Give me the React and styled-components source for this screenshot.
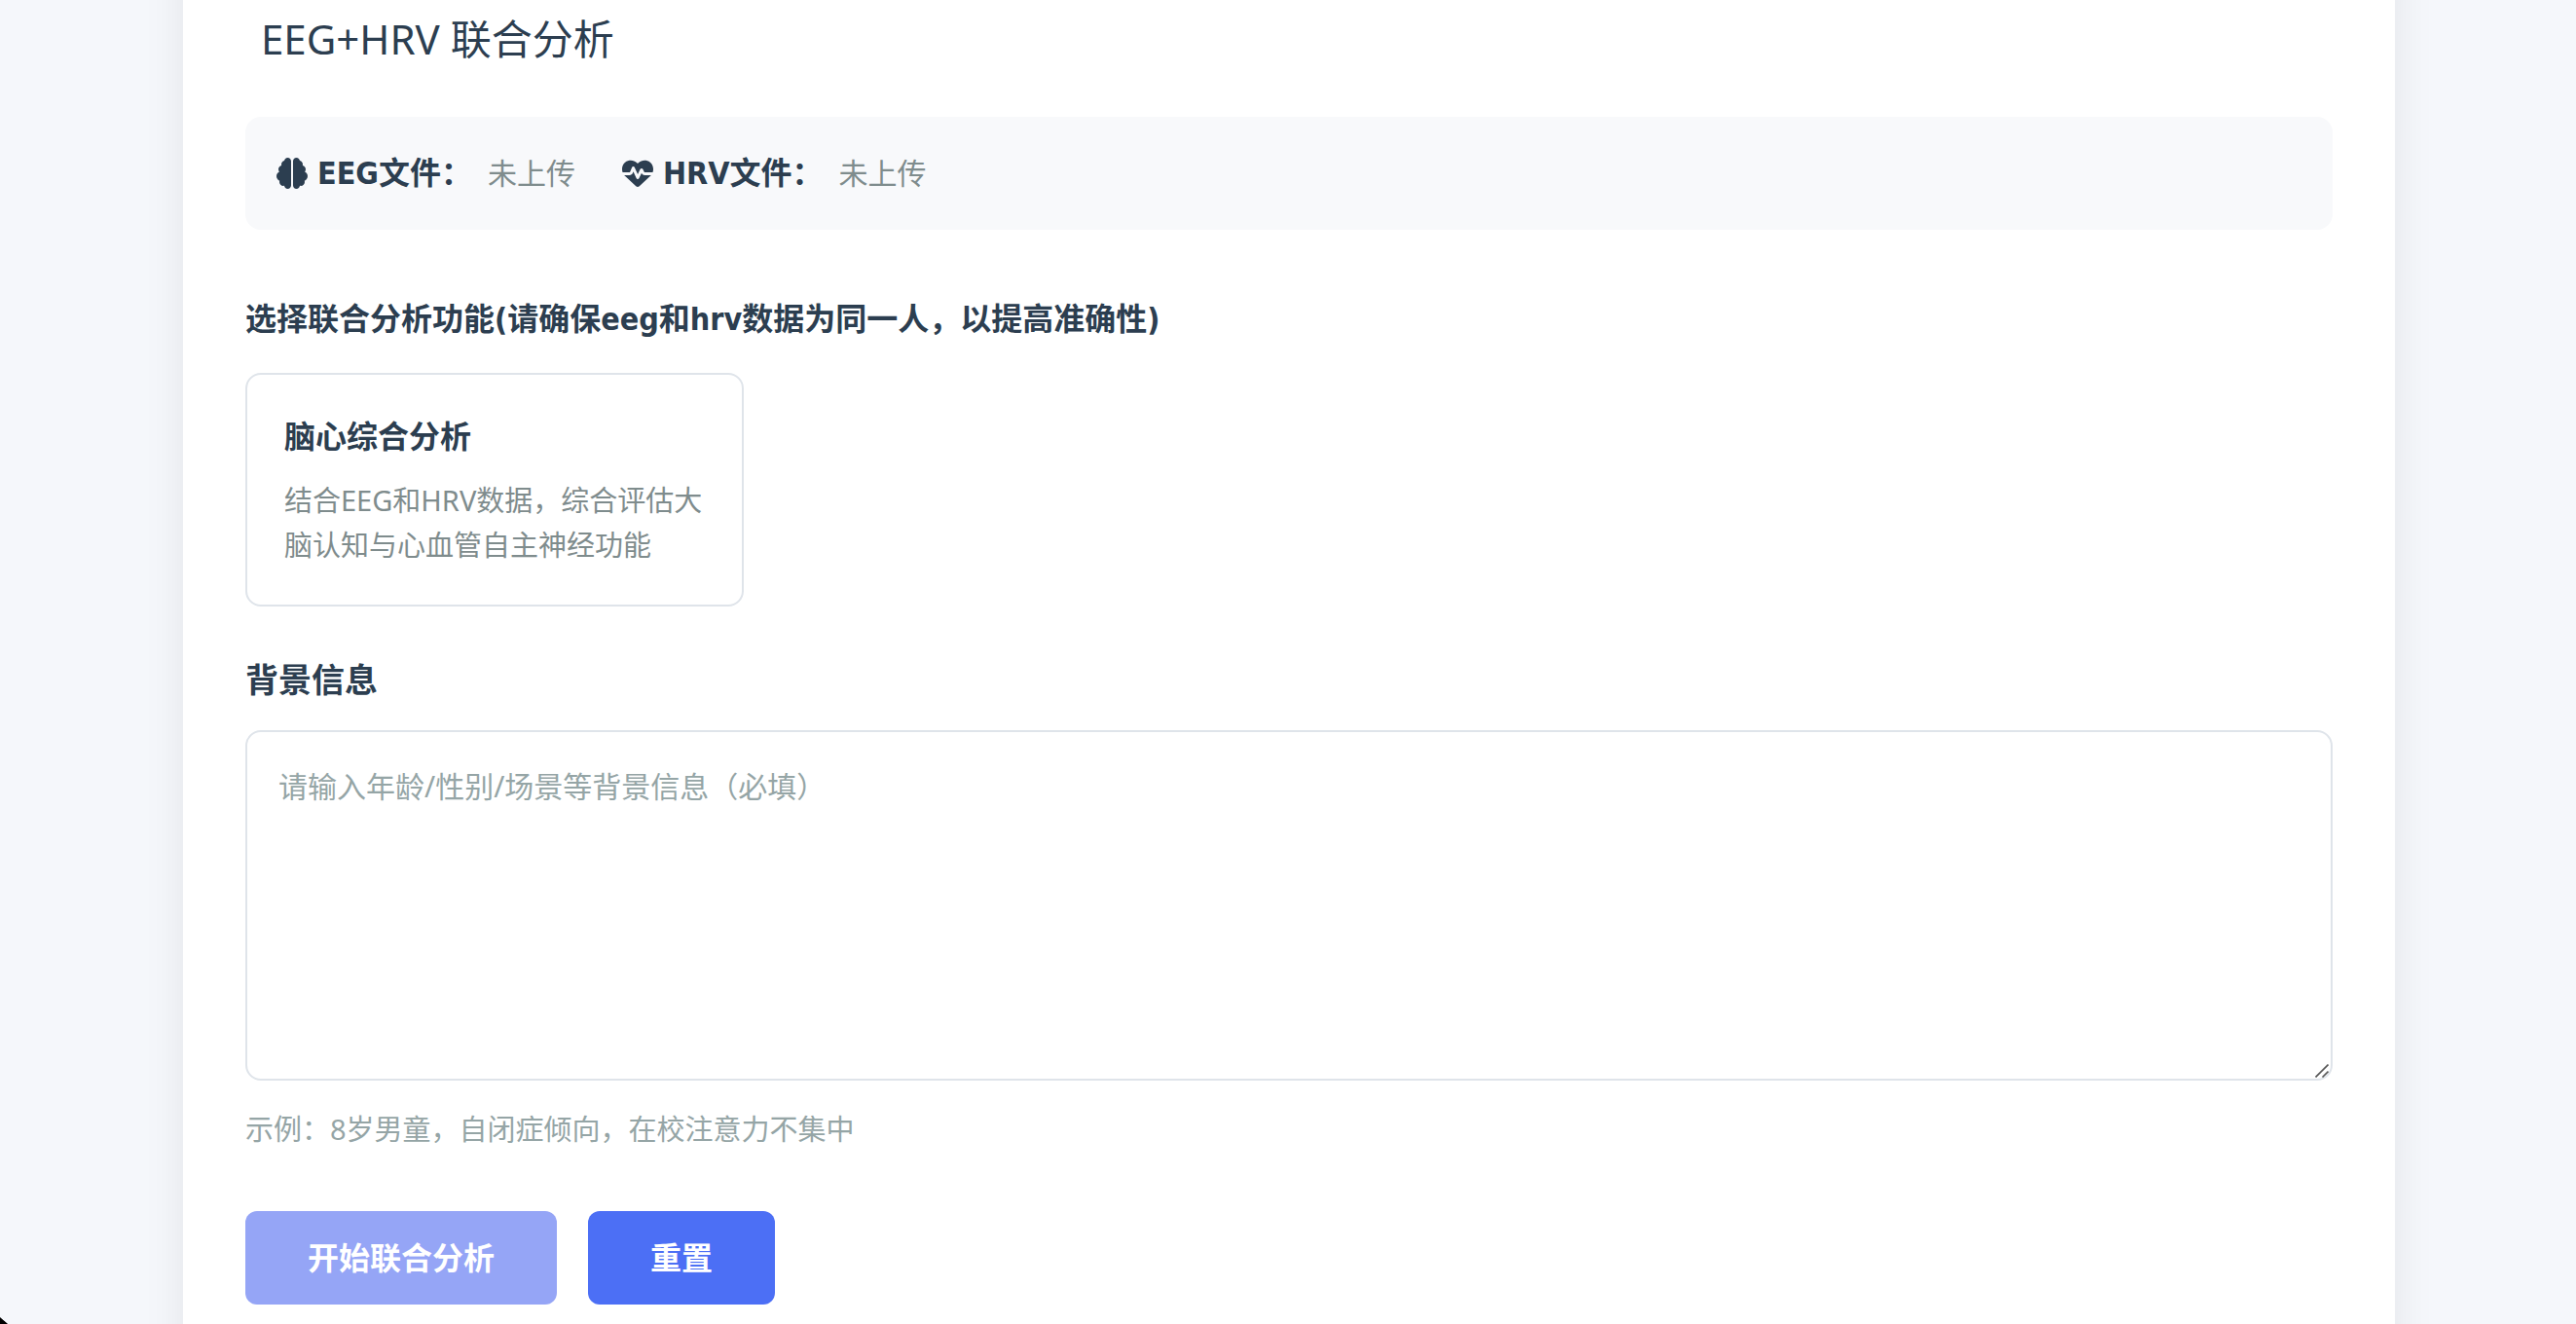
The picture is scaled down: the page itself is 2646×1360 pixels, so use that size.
import React, { useState } from "react";
import styled, { createGlobalStyle, css } from "styled-components";
import { FaBrain, FaHeartPulse } from "react-icons/fa6";

const GlobalStyle = createGlobalStyle`
  *, *::before, *::after { box-sizing: border-box; }
  body {
    margin: 0;
    background: #f5f7fb;
    color: #2c3e50;
    font-family: "Noto Sans", "Noto Sans CJK SC", sans-serif;
    font-size: 32px;
    line-height: 52px;
  }
  h2, h3, h4, p { margin: 0; }
`;

const strongText = css`
  font-family: "DejaVu Sans Condensed", "Noto Sans", "Noto Sans CJK SC", sans-serif;
  font-weight: 700;
`;

const Page = styled.div`
  display: flex;
  min-height: 100vh;
  padding: 0 186px 0 188px;
  overflow: hidden;
`;

const Panel = styled.main`
  flex: 1;
  min-width: 0;
  margin: -64px 0;
  padding: 72px 64px 84px;
  background: #fff;
  box-shadow: 0 0 40px rgba(0, 0, 0, 0.08);
`;

const Title = styled.h2`
  padding-left: 16px;
  font-size: 42px;
  font-weight: 400;
  line-height: 64px;
`;

const FileBar = styled.section`
  display: flex;
  flex-wrap: wrap;
  align-items: center;
  gap: 48px;
  margin-top: 48px;
  padding: 32px;
  border-radius: 16px;
  background: #f8f9fb;
`;

const FileItem = styled.div`
  display: flex;
  align-items: center;
  gap: 16px;
`;

const FileLabel = styled.span`
  ${strongText}
  display: flex;
  align-items: center;
  gap: 10px;

  svg { width: 32px; height: 32px; }
`;

const FileStatus = styled.span`
  color: #7f8c8d;
  font-size: 30px;
`;

const SectionTitle = styled.h3`
  ${strongText}
  margin: 66px 0 29px;
  font-size: 32px;
`;

const OptionGrid = styled.div`
  display: grid;
  grid-template-columns: repeat(auto-fill, minmax(480px, 512px));
  gap: 32px;
`;

const OptionCard = styled.button`
  display: block;
  padding: 38px;
  border: 2px solid #dfe4ea;
  border-radius: 16px;
  background: #fff;
  color: inherit;
  font: inherit;
  text-align: left;
  cursor: pointer;
`;

const OptionTitle = styled.span`
  ${strongText}
  display: block;
  margin-bottom: 16px;
`;

const OptionText = styled.span`
  display: block;
  color: #7f8c8d;
  font-size: 29px;
  line-height: 46px;
`;

const FieldLabel = styled.label`
  ${strongText}
  display: block;
  margin: 50px 0 25px;
  font-size: 34px;
`;

const FieldBox = styled.div`
  position: relative;
  display: flex;
`;

const TextArea = styled.textarea`
  flex: 1;
  min-width: 0;
  height: 360px;
  padding: 32px;
  border: 2px solid #dfe4ea;
  border-radius: 16px;
  background: #fff;
  color: inherit;
  font: inherit;
  font-size: 30px;
  line-height: 48px;
  resize: none;

  &::placeholder { color: #95a5a6; opacity: 1; }
`;

const Grip = styled.svg`
  position: absolute;
  right: 4px;
  bottom: 3px;
  width: 14px;
  height: 14px;
  pointer-events: none;
`;

const Hint = styled.p`
  margin: 24px 0 58px;
  color: #95a5a6;
  font-size: 29px;
`;

const Actions = styled.div`
  display: flex;
  gap: 32px;
`;

const Button = styled.button`
  ${strongText}
  height: 96px;
  padding: 0 64px 4px;
  border: 0;
  border-radius: 12px;
  background: #4c6ff5;
  color: #fff;
  font-size: 32px;
  cursor: pointer;

  &:disabled { background: #95a5f6; cursor: not-allowed; }
`;

const WindowCorner = styled.div`
  position: fixed;
  left: 0;
  bottom: 0;
  width: 8px;
  height: 7px;
  background: linear-gradient(to top right, #000 46%, transparent 54%);
  pointer-events: none;
`;

const files = [
  { name: "EEG文件：", Icon: FaBrain },
  { name: "HRV文件：", Icon: FaHeartPulse },
];

export default function App() {
  const [text, setText] = useState("");
  return (
    <>
      <GlobalStyle />
      <Page>
        <Panel>
          <Title>EEG+HRV 联合分析</Title>
          <FileBar>
            {files.map(({ name, Icon }) => (
              <FileItem key={name}>
                <FileLabel>
                  <Icon aria-hidden="true" />
                  {name}
                </FileLabel>
                <FileStatus>未上传</FileStatus>
              </FileItem>
            ))}
          </FileBar>
          <SectionTitle>选择联合分析功能(请确保eeg和hrv数据为同一人，以提高准确性)</SectionTitle>
          <OptionGrid>
            <OptionCard type="button">
              <OptionTitle>脑心综合分析</OptionTitle>
              <OptionText>结合EEG和HRV数据，综合评估大脑认知与心血管自主神经功能</OptionText>
            </OptionCard>
          </OptionGrid>
          <FieldLabel htmlFor="background">背景信息</FieldLabel>
          <FieldBox>
            <TextArea
              id="background"
              value={text}
              onChange={(e) => setText(e.target.value)}
              placeholder="请输入年龄/性别/场景等背景信息（必填）"
            />
            <Grip viewBox="0 0 14 14" fill="none" stroke="#555" strokeWidth="1.6" aria-hidden="true">
              <path d="M0.5 13.5 13.5 0.5M7.5 13.5 13.5 7.5" />
            </Grip>
          </FieldBox>
          <Hint>示例：8岁男童，自闭症倾向，在校注意力不集中</Hint>
          <Actions>
            <Button type="button" disabled>开始联合分析</Button>
            <Button type="button" onClick={() => setText("")}>重置</Button>
          </Actions>
        </Panel>
      </Page>
      <WindowCorner />
    </>
  );
}
